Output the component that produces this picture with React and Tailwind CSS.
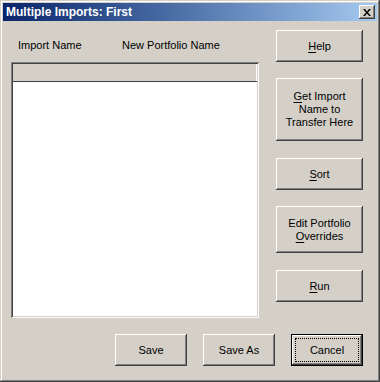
import React from "react";

function Btn({ children, className = "" }) {
  return (
    <div
      className={`flex items-center justify-center text-center leading-[13px] bg-[#d4d0c8] shadow-[inset_-1px_-1px_#404040,inset_1px_1px_#ffffff,inset_-2px_-2px_#808080,inset_2px_2px_#d4d0c8] ${className}`}
    >
      <div>{children}</div>
    </div>
  );
}

function U({ children }) {
  return <span className="underline underline-offset-[2px]">{children}</span>;
}

export default function App() {
  return (
    <div
      className="w-[380px] h-[382px] bg-[#d4d0c8] p-[3px] flex flex-col text-black text-[11px] shadow-[inset_-1px_-1px_#404040,inset_1px_1px_#d4d0c8,inset_-2px_-2px_#808080,inset_2px_2px_#ffffff]"
      style={{ fontFamily: '"Liberation Sans", Arial, sans-serif' }}
    >
      {/* Title bar */}
      <div className="h-[18px] flex items-center justify-between bg-gradient-to-r from-[#0a246a] to-[#a6caf0] pl-[3px] pr-[2px]">
        <span className="text-white font-bold text-[12px] leading-none">Multiple Imports: First</span>
        <div className="w-[16px] h-[14px] bg-[#d4d0c8] flex items-center justify-center shadow-[inset_-1px_-1px_#404040,inset_1px_1px_#ffffff,inset_-2px_-2px_#808080,inset_2px_2px_#d4d0c8]">
          <svg width="8" height="7" viewBox="0 0 8 7">
            <path d="M0 0h2l2 2.5L6 0h2L5 3.5 8 7H6L4 4.5 2 7H0l3-3.5z" fill="#000" />
          </svg>
        </div>
      </div>

      {/* Body */}
      <div className="flex pl-[8px]">
        {/* Left column */}
        <div className="w-[248px] flex flex-col">
          <div className="h-[41px] flex items-end pb-[9px]">
            <span className="ml-[7px] w-[104px]">Import Name</span>
            <span>New Portfolio Name</span>
          </div>
          <div className="h-[256px] bg-white p-[2px] flex flex-col shadow-[inset_1px_1px_#808080,inset_-1px_-1px_#ffffff,inset_2px_2px_#404040,inset_-2px_-2px_#d4d0c8]">
            <div className="h-[18px] bg-[#d4d0c8] border-b border-[#404040] shadow-[inset_-1px_0_#ffffff]" />
          </div>
        </div>

        {/* Right column */}
        <div className="ml-[17px] w-[87px] flex flex-col pt-[9px]">
          <Btn className="h-[32px]">
            <U>H</U>elp
          </Btn>
          <Btn className="h-[63px] mt-[16px]">
            <U>G</U>et Import
            <br />
            Name to
            <br />
            Transfer Here
          </Btn>
          <Btn className="h-[32px] mt-[17px]">
            <U>S</U>ort
          </Btn>
          <Btn className="h-[47px] mt-[16px]">
            Edit Portfolio
            <br />
            <U>O</U>verrides
          </Btn>
          <Btn className="h-[32px] mt-[17px]">
            <U>R</U>un
          </Btn>
        </div>
      </div>

      {/* Bottom row */}
      <div className="flex mt-[16px] pl-[112px] gap-[16px]">
        <Btn className="w-[72px] h-[32px]">Save</Btn>
        <Btn className="w-[72px] h-[32px]">Save As</Btn>
        <div className="w-[72px] h-[32px] border border-black">
          <div className="w-full h-full p-[3px] bg-[#d4d0c8] shadow-[inset_-1px_-1px_#404040,inset_1px_1px_#ffffff,inset_-2px_-2px_#808080,inset_2px_2px_#d4d0c8]">
            <div className="w-full h-full border border-dotted border-black flex items-center justify-center">
              Cancel
            </div>
          </div>
        </div>
      </div>
    </div>
  );
}
